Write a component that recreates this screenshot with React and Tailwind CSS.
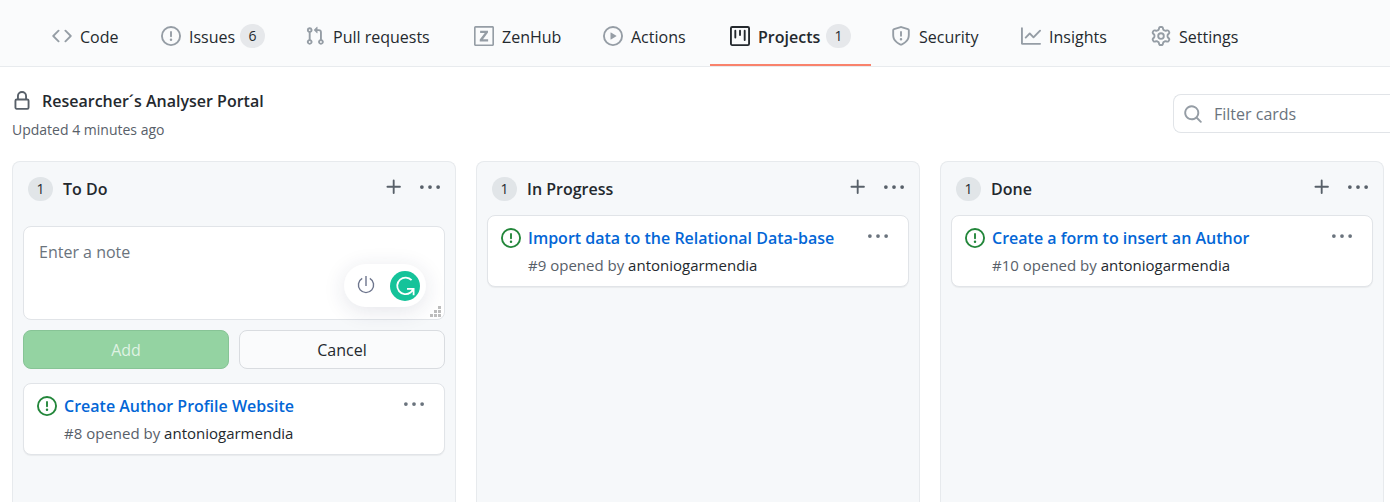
import React from "react";

const PATHS = {
  code: "M4.72 3.22a.75.75 0 011.06 1.06L2.06 8l3.72 3.72a.75.75 0 11-1.06 1.06L.47 8.53a.75.75 0 010-1.06l4.25-4.25zm6.56 0a.75.75 0 10-1.06 1.06L13.94 8l-3.72 3.72a.75.75 0 101.06 1.06l4.25-4.25a.75.75 0 000-1.06l-4.25-4.25z",
  issue: "M8 1.5a6.5 6.5 0 100 13 6.5 6.5 0 000-13zM0 8a8 8 0 1116 0A8 8 0 010 8zm9 3a1 1 0 11-2 0 1 1 0 012 0zm-.25-6.25a.75.75 0 00-1.5 0v3.5a.75.75 0 001.5 0v-3.5z",
  pull: "M7.177 3.073L9.573.677A.25.25 0 0110 .854v4.792a.25.25 0 01-.427.177L7.177 3.427a.25.25 0 010-.354zM3.75 2.5a.75.75 0 100 1.5.75.75 0 000-1.5zm-2.25.75a2.25 2.25 0 113 2.122v5.256a2.251 2.251 0 11-1.5 0V5.372A2.25 2.25 0 011.5 3.25zM11 2.5h-1V4h1a1 1 0 011 1v5.628a2.251 2.251 0 101.5 0V5A2.5 2.5 0 0011 2.5zm1 10.25a.75.75 0 111.5 0 .75.75 0 01-1.5 0zM3.75 12a.75.75 0 100 1.5.75.75 0 000-1.5z",
  zenhub: "M1.25 0A1.25 1.25 0 000 1.25v13.5C0 15.44.56 16 1.25 16h13.5c.69 0 1.25-.56 1.25-1.25V1.25C16 .56 15.44 0 14.75 0H1.25zM1.3 1.3h13.4v13.4H1.3V1.3zM4.9 3.7h6.3v1.5L7.2 10.5h4.1v1.8H4.6v-1.5l4-5.3H4.9V3.7z",
  play: "M1.5 8a6.5 6.5 0 1113 0 6.5 6.5 0 01-13 0zM8 0a8 8 0 100 16A8 8 0 008 0zM6.379 5.227A.25.25 0 006 5.442v5.117a.25.25 0 00.379.214l4.264-2.559a.25.25 0 000-.428L6.379 5.227z",
  project: "M1.75 0A1.75 1.75 0 000 1.75v12.5C0 15.216.784 16 1.75 16h12.5A1.75 1.75 0 0016 14.25V1.75A1.75 1.75 0 0014.25 0H1.75zM1.5 1.75a.25.25 0 01.25-.25h12.5a.25.25 0 01.25.25v12.5a.25.25 0 01-.25.25H1.75a.25.25 0 01-.25-.25V1.75zM11.75 3a.75.75 0 00-.75.75v7.5a.75.75 0 001.5 0v-7.5a.75.75 0 00-.75-.75zm-8.25.75a.75.75 0 011.5 0v5.5a.75.75 0 01-1.5 0v-5.5zM8 3a.75.75 0 00-.75.75v3.5a.75.75 0 001.5 0v-3.5A.75.75 0 008 3z",
  shield: "M7.467.133a1.75 1.75 0 011.066 0l5.25 1.68A1.75 1.75 0 0115 3.48V7c0 1.566-.32 3.182-1.303 4.682-.983 1.498-2.585 2.813-5.032 3.855a1.7 1.7 0 01-1.33 0c-2.447-1.042-4.049-2.357-5.032-3.855C1.32 10.182 1 8.566 1 7V3.48a1.75 1.75 0 011.217-1.667l5.25-1.68zm.61 1.429a.25.25 0 00-.153 0l-5.25 1.68a.25.25 0 00-.174.238V7c0 1.358.275 2.666 1.057 3.86.784 1.194 2.121 2.34 4.366 3.297a.2.2 0 00.154 0c2.245-.956 3.582-2.104 4.366-3.298C13.225 9.666 13.5 8.36 13.5 7V3.48a.25.25 0 00-.174-.237l-5.25-1.68zM9 10.5a1 1 0 11-2 0 1 1 0 012 0zm-.25-5.75a.75.75 0 10-1.5 0v3a.75.75 0 001.5 0v-3z",
  graph: "M1.5 1.75a.75.75 0 00-1.5 0v12.5c0 .414.336.75.75.75h14.5a.75.75 0 000-1.5H1.5V1.75zm14.28 2.53a.75.75 0 00-1.06-1.06L10 7.94 7.53 5.47a.75.75 0 00-1.06 0L3.22 8.72a.75.75 0 001.06 1.06L7 7.06l2.47 2.47a.75.75 0 001.06 0l5.25-5.25z",
  gear: "M7.429 1.525a6.593 6.593 0 011.142 0c.036.003.108.036.137.146l.289 1.105c.147.56.55.967.997 1.189.174.086.341.183.501.29.417.278.97.423 1.53.27l1.102-.303c.11-.03.175.016.195.046.219.31.41.641.573.989.014.031.022.11-.059.19l-.815.806c-.411.406-.562.957-.53 1.456a4.588 4.588 0 010 .582c-.032.499.119 1.05.53 1.456l.815.806c.08.08.073.159.059.19a6.494 6.494 0 01-.573.99c-.02.029-.086.074-.195.045l-1.103-.303c-.559-.153-1.112-.008-1.529.27-.16.107-.327.204-.5.29-.449.222-.851.628-.998 1.189l-.289 1.105c-.029.11-.101.143-.137.146a6.613 6.613 0 01-1.142 0c-.036-.003-.108-.037-.137-.146l-.289-1.105c-.147-.56-.55-.967-.997-1.189a4.502 4.502 0 01-.501-.29c-.417-.278-.97-.423-1.53-.27l-1.102.303c-.11.03-.175-.016-.195-.046a6.492 6.492 0 01-.573-.989c-.014-.031-.022-.11.059-.19l.815-.806c.411-.406.562-.957.53-1.456a4.587 4.587 0 010-.582c.032-.499-.119-1.05-.53-1.456l-.815-.806c-.08-.08-.073-.159-.059-.19a6.44 6.44 0 01.573-.99c.02-.029.086-.075.195-.045l1.103.303c.559.153 1.112.008 1.529-.27.16-.107.327-.204.5-.29.449-.222.851-.628.998-1.189l.289-1.105c.029-.11.101-.143.137-.146zM8 0c-.236 0-.47.01-.701.03-.743.065-1.29.615-1.458 1.261l-.29 1.106c-.017.066-.078.158-.211.224a5.994 5.994 0 00-.668.386c-.123.082-.233.09-.3.071L3.27 2.776c-.644-.177-1.392.02-1.82.63a7.977 7.977 0 00-.704 1.217c-.315.675-.111 1.422.363 1.891l.815.806c.05.048.098.147.088.294a6.084 6.084 0 000 .772c.01.147-.038.246-.088.294l-.815.806c-.474.469-.678 1.216-.363 1.891.2.428.436.835.704 1.218.428.609 1.176.806 1.82.63l1.103-.303c.066-.019.176-.011.299.071.213.143.436.272.668.386.133.066.194.158.212.224l.289 1.106c.169.646.715 1.196 1.458 1.26a8.094 8.094 0 001.402 0c.743-.064 1.29-.614 1.458-1.26l.29-1.106c.017-.066.078-.158.211-.224a5.98 5.98 0 00.668-.386c.123-.082.233-.09.3-.071l1.102.302c.644.177 1.392-.02 1.82-.63.268-.382.505-.789.704-1.217.315-.675.111-1.422-.364-1.891l-.814-.806c-.05-.048-.098-.147-.088-.294a6.1 6.1 0 000-.772c-.01-.147.039-.246.088-.294l.814-.806c.475-.469.679-1.216.364-1.891a7.992 7.992 0 00-.704-1.218c-.428-.609-1.176-.806-1.82-.63l-1.103.303c-.066.019-.176.011-.299-.071a5.991 5.991 0 00-.668-.386c-.133-.066-.194-.158-.212-.224L10.16 1.29C9.99.645 9.444.095 8.701.031A8.094 8.094 0 008 0zm1.5 8a1.5 1.5 0 11-3 0 1.5 1.5 0 013 0zM11 8a3 3 0 11-6 0 3 3 0 016 0z",
  lock: "M4 4v2h-.25A1.75 1.75 0 002 7.75v5.5c0 .966.784 1.75 1.75 1.75h8.5A1.75 1.75 0 0014 13.25v-5.5A1.75 1.75 0 0012.25 6H12V4a4 4 0 10-8 0zm6.5 2V4a2.5 2.5 0 10-5 0v2h5zM12 7.5h.25a.25.25 0 01.25.25v5.5a.25.25 0 01-.25.25h-8.5a.25.25 0 01-.25-.25v-5.5a.25.25 0 01.25-.25H12z",
  search: "M11.5 7a4.499 4.499 0 11-8.998 0A4.499 4.499 0 0111.5 7zm-.82 4.74a6 6 0 111.06-1.06l3.04 3.04a.75.75 0 11-1.06 1.06l-3.04-3.04z",
  plus: "M7.75 2a.75.75 0 01.75.75V7h4.25a.75.75 0 110 1.5H8.5v4.25a.75.75 0 11-1.5 0V8.5H2.75a.75.75 0 010-1.5H7V2.75A.75.75 0 017.75 2z",
  kebab: "M8 9.5a1.5 1.5 0 100-3 1.5 1.5 0 000 3zM1.5 9.5a1.5 1.5 0 100-3 1.5 1.5 0 000 3zm13 0a1.5 1.5 0 100-3 1.5 1.5 0 000 3z",
};

function Icon({ name, className = "" }) {
  return (
    <svg viewBox="0 0 16 16" fill="currentColor" fillRule="evenodd" aria-hidden="true" className={`size-5 shrink-0 ${className}`}>
      <path d={PATHS[name]} />
    </svg>
  );
}

function Counter({ children, className = "bg-[#e6e8eb]" }) {
  return (
    <span className={`flex h-6 w-[25px] shrink-0 items-center justify-center rounded-full text-sm font-normal text-[#24292e] ${className}`}>
      {children}
    </span>
  );
}

const TABS = [
  { label: "Code", icon: "code", width: "min-w-[109px]" },
  { label: "Issues", icon: "issue", count: 6, width: "min-w-[144px]" },
  { label: "Pull requests", icon: "pull", width: "min-w-[169px]" },
  { label: "ZenHub", icon: "zenhub", width: "min-w-[129px]" },
  { label: "Actions", icon: "play", width: "min-w-[127px]" },
  { label: "Projects", icon: "project", count: 1, active: true, width: "min-w-[161px]" },
  { label: "Security", icon: "shield", width: "min-w-[130px]" },
  { label: "Insights", icon: "graph", width: "min-w-[130px]" },
  { label: "Settings", icon: "gear", width: "min-w-[131px]" },
];

function Tab({ tab }) {
  return (
    <a
      href="#"
      aria-current={tab.active ? "page" : undefined}
      className={`-mb-px flex h-full shrink-0 items-center border-b-2 px-5 pt-2 text-base whitespace-nowrap text-[#24292e] ${tab.width} ${tab.active ? "border-[#f9826c] font-semibold" : "border-transparent"}`}
    >
      <Icon name={tab.icon} className={`mr-2 ${tab.active ? "" : "text-[#959da5]"}`} />
      <span className="pt-[2px]">{tab.label}</span>
      {tab.count && <span className="ml-auto"><Counter>{tab.count}</Counter></span>}
    </a>
  );
}

function Card({ title, number }) {
  return (
    <article className="flex h-[72px] rounded-lg border border-[#e1e4e8] bg-white pt-3 pr-5 pl-[13px] shadow-[0_1px_1px_rgba(27,31,35,0.06)]">
      <Icon name="issue" className="text-[#22863a]" />
      <div className="ml-[7px] min-w-0 flex-1">
        <a href="#" className="block text-base leading-5 font-semibold whitespace-nowrap text-[#0366d6]">{title}</a>
        <p className="mt-[7px] text-[15px] leading-5 whitespace-nowrap text-[#586069]">
          #{number} opened by <a href="#" className="text-[#24292e]">antoniogarmendia</a>
        </p>
      </div>
      <button aria-label="Card menu" className="flex h-4 items-center text-[#6a737d]"><Icon name="kebab" /></button>
    </article>
  );
}

function GrammarlyBadge() {
  return (
    <div className="absolute right-[19px] bottom-[13px] flex h-[43px] w-[82px] items-center justify-between rounded-full bg-white pr-[6px] pl-[13px] shadow-[0_4px_22px_rgba(30,40,80,0.12)]">
      <button type="button" aria-label="Turn off">
        <svg viewBox="0 0 18 20" className="h-5 w-[18px]" fill="none" stroke="#6d758d" strokeWidth="1.4">
          <path d="M9 0v10M5.2 2.4a7.6 7.6 0 1 0 7.6 0" />
        </svg>
      </button>
      <button type="button" aria-label="Grammarly">
        <svg viewBox="0 0 30 30" className="size-[30px]">
          <circle cx="15" cy="15" r="15" fill="#15c39a" />
          <path d="M21.6 9.2A8.3 8.3 0 1 0 20.5 21.5L23.6 18.2M17 17.8H23.6V24.2" fill="none" stroke="#fff" strokeWidth="1.8" />
        </svg>
      </button>
    </div>
  );
}

function NoteForm() {
  return (
    <form className="mt-[11px] mb-[14px]">
      <div className="relative">
        <textarea
          aria-label="Note"
          placeholder="Enter a note"
          className="block h-[94px] w-full resize-none rounded-lg border border-[#e1e4e8] bg-white px-[15px] py-[13px] text-base leading-6 placeholder:text-[#6a737d]"
        />
        <svg viewBox="0 0 11 11" className="absolute right-1 bottom-[3px] size-[11px]" fill="#bdbdbd" aria-hidden="true">
          <path d="M8 0h3v3H8zM8 4h3v3H8zM4 4h3v3H4zM0 8h3v3H0zM4 8h3v3H4zM8 8h3v3H8z" />
        </svg>
        <GrammarlyBadge />
      </div>
      <div className="mt-[10px] grid grid-cols-2 gap-[10px] text-base">
        <button type="button" disabled className="h-[39px] rounded-lg border border-[#87c496] bg-[#94d3a2] pt-px text-[#dff2e3]">Add</button>
        <button type="button" className="h-[39px] rounded-lg border border-[#d9dce0] bg-[#fafbfc] pt-px text-[#24292e]">Cancel</button>
      </div>
    </form>
  );
}

function Column({ title, card, form }) {
  return (
    <section className="min-w-0 rounded-t-lg border border-b-0 border-[#e7eaed] bg-[#f6f8fa] px-[10px]">
      <header className="flex h-[53px] items-center px-[5px]">
        <Counter className="bg-[#e1e5e8]">1</Counter>
        <h3 className="ml-[10px] flex-1 text-base font-semibold text-[#24292e]">{title}</h3>
        <div className="flex gap-4 pb-1 text-[#586069]">
          <button aria-label={`Add a note to ${title}`}><Icon name="plus" /></button>
          <button aria-label={`${title} menu`}><Icon name="kebab" /></button>
        </div>
      </header>
      {form && <NoteForm />}
      <Card {...card} />
    </section>
  );
}

export default function App() {
  return (
    <div className="flex min-h-screen flex-col overflow-hidden bg-white font-['Open_Sans','Noto_Sans',sans-serif]">
      <nav aria-label="Repository" className="flex h-[67px] items-stretch border-b border-[#e8ebee] bg-[#fafbfc] pl-8">
        {TABS.map((tab) => <Tab key={tab.label} tab={tab} />)}
      </nav>
      <header className="flex items-start justify-between pt-[22px] pb-[21px] pl-3">
        <div>
          <h1 className="flex items-center gap-[10px] text-base leading-6 font-semibold text-[#24292e]">
            <Icon name="lock" className="text-[#586069]" />
            Researcher´s Analyser Portal
          </h1>
          <p className="mt-[7px] text-sm leading-5 text-[#586069]">Updated 4 minutes ago</p>
        </div>
        <label className="mt-[5px] flex h-[39px] w-[217px] items-center gap-[11px] rounded-l-lg border border-r-0 border-[#e1e4e8] pl-[9px]">
          <Icon name="search" className="text-[#959da5]" />
          <input type="text" aria-label="Filter cards" placeholder="Filter cards" className="min-w-0 flex-1 bg-transparent pt-px text-base outline-none placeholder:text-[#6a737d]" />
        </label>
      </header>
      <main className="grid flex-1 grid-cols-3 gap-5 pr-[6px] pl-3">
        <Column title="To Do" form card={{ title: "Create Author Profile Website", number: 8 }} />
        <Column title="In Progress" card={{ title: "Import data to the Relational Data-base", number: 9 }} />
        <Column title="Done" card={{ title: "Create a form to insert an Author", number: 10 }} />
      </main>
    </div>
  );
}
